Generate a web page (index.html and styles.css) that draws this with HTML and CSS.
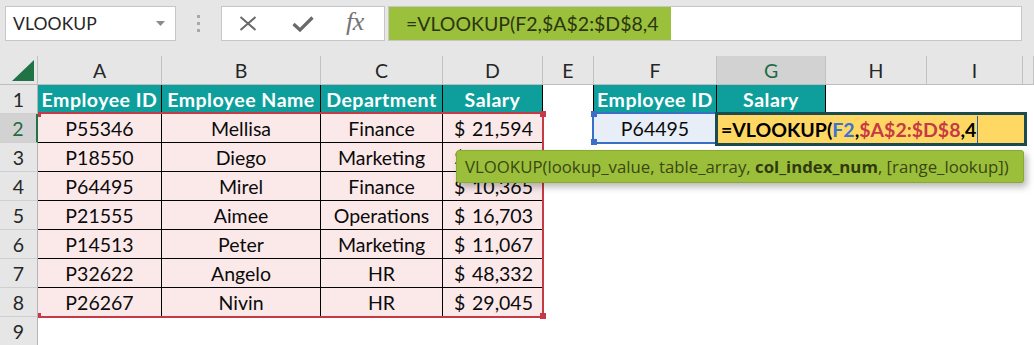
FILE: index.html
```html
<!DOCTYPE html>
<html>
<head>
<meta charset="utf-8">
<link rel="stylesheet" href="styles.css">
</head>
<body>
<div class="toolbar">
  <div class="namebox">
    <span class="nb-text">VLOOKUP</span>
    <svg class="nb-arrow" width="9" height="5" viewBox="0 0 9 5"><path d="M0 0 H9 L4.5 5 Z" fill="#8a8a8a"/></svg>
  </div>
  <div class="dots"><span></span><span></span><span></span></div>
  <div class="fxbox">
    <svg class="ico-x" width="18" height="15" viewBox="0 0 18 15"><path d="M1.5 1 L16.5 14 M16.5 1 L1.5 14" stroke="#6a6a6a" stroke-width="2" fill="none"/></svg>
    <svg class="ico-check" width="22" height="16" viewBox="0 0 22 16"><path d="M1.5 8 L8 14 L20.5 1.5" stroke="#6a6a6a" stroke-width="3.2" fill="none"/></svg>
    <span class="fx">fx</span>
  </div>
  <div class="formula"><span class="formula-hl">=VLOOKUP(F2,$A$2:$D$8,4</span></div>
</div>

<div class="sheet">
  <div class="c ch corner"><svg width="22" height="21" viewBox="0 0 22 21"><path d="M22 0 V21 H0 Z" fill="#217346"/></svg></div>
  <div class="c ch">A</div>
  <div class="c ch">B</div>
  <div class="c ch">C</div>
  <div class="c ch">D</div>
  <div class="c ch">E</div>
  <div class="c ch">F</div>
  <div class="c ch active">G</div>
  <div class="c ch">H</div>
  <div class="c ch">I</div>
  <div class="c ch"></div>

  <div class="c rh">1</div>
  <div class="c th">Employee ID</div>
  <div class="c th">Employee Name</div>
  <div class="c th">Department</div>
  <div class="c th">Salary</div>
  <div class="c e e1"></div>
  <div class="c th">Employee ID</div>
  <div class="c th">Salary</div>
  <div class="c e"></div>
  <div class="c e"></div>
  <div class="c e"></div>

  <div class="c rh active">2</div>
  <div class="c td">P55346</div>
  <div class="c td">Mellisa</div>
  <div class="c td">Finance</div>
  <div class="c td money"><span>$</span><span>21,594</span></div>
  <div class="c e"></div>
  <div class="c sel">P64495</div>
  <div class="c e"></div>
  <div class="c e"></div>
  <div class="c e"></div>
  <div class="c e"></div>

  <div class="c rh">3</div>
  <div class="c td">P18550</div>
  <div class="c td">Diego</div>
  <div class="c td">Marketing</div>
  <div class="c td money"><span>$</span><span class="hidden-val">38,210</span></div>
  <div class="c e"></div>
  <div class="c e"></div>
  <div class="c e"></div>
  <div class="c e"></div>
  <div class="c e"></div>
  <div class="c e"></div>

  <div class="c rh">4</div>
  <div class="c td">P64495</div>
  <div class="c td">Mirel</div>
  <div class="c td">Finance</div>
  <div class="c td money"><span>$</span><span>10,365</span></div>
  <div class="c e"></div>
  <div class="c e"></div>
  <div class="c e"></div>
  <div class="c e"></div>
  <div class="c e"></div>
  <div class="c e"></div>

  <div class="c rh">5</div>
  <div class="c td">P21555</div>
  <div class="c td">Aimee</div>
  <div class="c td">Operations</div>
  <div class="c td money"><span>$</span><span>16,703</span></div>
  <div class="c e"></div>
  <div class="c e"></div>
  <div class="c e"></div>
  <div class="c e"></div>
  <div class="c e"></div>
  <div class="c e"></div>

  <div class="c rh">6</div>
  <div class="c td">P14513</div>
  <div class="c td">Peter</div>
  <div class="c td">Marketing</div>
  <div class="c td money"><span>$</span><span>11,067</span></div>
  <div class="c e"></div>
  <div class="c e"></div>
  <div class="c e"></div>
  <div class="c e"></div>
  <div class="c e"></div>
  <div class="c e"></div>

  <div class="c rh">7</div>
  <div class="c td">P32622</div>
  <div class="c td">Angelo</div>
  <div class="c td">HR</div>
  <div class="c td money"><span>$</span><span>48,332</span></div>
  <div class="c e"></div>
  <div class="c e"></div>
  <div class="c e"></div>
  <div class="c e"></div>
  <div class="c e"></div>
  <div class="c e"></div>

  <div class="c rh">8</div>
  <div class="c td">P26267</div>
  <div class="c td">Nivin</div>
  <div class="c td">HR</div>
  <div class="c td money"><span>$</span><span>29,045</span></div>
  <div class="c e"></div>
  <div class="c e"></div>
  <div class="c e"></div>
  <div class="c e"></div>
  <div class="c e"></div>
  <div class="c e"></div>

  <div class="c rh">9</div>
  <div class="c e"></div>
  <div class="c e"></div>
  <div class="c e"></div>
  <div class="c e"></div>
  <div class="c e"></div>
  <div class="c e"></div>
  <div class="c e"></div>
  <div class="c e"></div>
  <div class="c e"></div>
  <div class="c e"></div>

  <div class="range-red">
    <i class="h h-tl"></i><i class="h h-tr"></i><i class="h h-bl"></i><i class="h h-br"></i>
  </div>
  <div class="range-blue">
    <i class="h h-tl"></i><i class="h h-bl"></i>
  </div>
  <div class="editbox"><span class="k">=VLOOKUP(</span><span class="ref-blue">F2</span><span class="k">,</span><span class="ref-red">$A$2:$D$8</span><span class="k">,4</span><span class="caret"></span></div>
  <div class="tooltip"><span class="tt-text">VLOOKUP(lookup_value, table_array, <b>col_index_num</b>, [range_lookup])</span></div>
</div>
</body>
</html>
```

FILE: styles.css
```css
html, body {
  margin: 0;
  padding: 0;
}
body {
  width: 1034px;
  height: 345px;
  overflow: hidden;
  background: #ffffff;
  font-family: Lato, "Open Sans", sans-serif;
  color: #000;
}

/* ---------- toolbar / formula bar ---------- */
.toolbar {
  height: 56px;
  box-sizing: border-box;
  background: #e6e6e6;
  display: flex;
  align-items: flex-start;
  padding-top: 6px;
}
.namebox {
  margin-left: 5px;
  width: 171px;
  height: 35px;
  box-sizing: border-box;
  border: 1px solid #c6c6c6;
  background: #fff;
  display: flex;
  align-items: center;
  justify-content: space-between;
  padding: 0 10px 0 7px;
}
.nb-text {
  font-size: 17.5px;
  color: #262626;
  letter-spacing: 0.1px;
}
.dots {
  margin-left: 21px;
  width: 3px;
  height: 35px;
  display: flex;
  flex-direction: column;
  justify-content: center;
  gap: 4px;
}
.dots span {
  width: 3px;
  height: 3px;
  background: #a8a8a8;
}
.fxbox {
  margin-left: 21px;
  width: 164px;
  height: 35px;
  box-sizing: border-box;
  border: 1px solid #c6c6c6;
  background: #fff;
  display: flex;
  align-items: center;
}
.ico-x {
  margin-left: 17px;
}
.ico-check {
  margin-left: 35px;
}
.fx {
  margin-left: 32px;
  font-family: "Liberation Serif", "DejaVu Serif", serif;
  font-style: italic;
  font-size: 26px;
  color: #747474;
  letter-spacing: -0.5px;
  margin-top: -3px;
}
.formula {
  margin-left: 3px;
  width: 634px;
  height: 35px;
  box-sizing: border-box;
  border: 1px solid #c6c6c6;
  background: #fff;
  display: flex;
}
.formula-hl {
  background: #9bc03b;
  color: #2b3512;
  font-size: 19.5px;
  display: flex;
  align-items: center;
  padding: 0 12px 0 17px;
}

/* ---------- sheet grid ---------- */
.sheet {
  position: relative;
  display: grid;
  grid-template-columns: 38px 124px 159px 122px 100px 51px 123px 109px 101px 96px 1fr;
  grid-template-rows: repeat(10, 29px);
}
.c {
  box-sizing: border-box;
  border-right: 1px solid transparent;
  border-bottom: 1px solid transparent;
  display: flex;
  align-items: center;
  justify-content: center;
  font-size: 19.5px;
  white-space: nowrap;
  overflow: hidden;
}
.ch {
  background: #e6e6e6;
  border-right-color: #c2c2c2;
  border-bottom-color: #bdbdbd;
  color: #262626;
}
.ch.active {
  background: #d2d2d2;
  color: #1d6b43;
}
.corner {
  justify-content: flex-end;
  align-items: flex-end;
  padding: 0 3px 3px 0;
}
.rh {
  background: #e6e6e6;
  border-right-color: #b5b5b5;
  border-bottom-color: #cfcfcf;
  color: #262626;
}
.rh.active {
  background: #d2d2d2;
  color: #1d6b43;
  border-right: 2px solid #217346;
}
.th {
  background: #0e9f9d;
  color: #ffffff;
  font-weight: 700;
  letter-spacing: 0.5px;
  border-right-color: #000;
  border-bottom-color: #000;
}
.td {
  background: #fbe9ea;
  border-right-color: #000;
  border-bottom-color: #000;
  color: #0b0b0b;
}
.money {
  justify-content: space-between;
  padding: 0 9px 0 11px;
}
.hidden-val {
  visibility: hidden;
}
.e {
  background: #fff;
}
.e1 {
  border-right-color: #000;
}
.sel {
  background: #e8eef8;
  color: #0b0b0b;
}

/* ---------- overlays ---------- */
.range-red {
  position: absolute;
  left: 38px;
  top: 56px;
  width: 506px;
  height: 206px;
  box-sizing: border-box;
  border: 2px solid #c63a45;
  border-left: none;
}
.range-red .h {
  position: absolute;
  width: 6px;
  height: 6px;
  background: #c63a45;
}
.range-red .h-tl { left: 0; top: -2px; width: 3px; height: 5px; }
.range-red .h-bl { left: 0; bottom: -2px; width: 3px; height: 5px; }
.range-red .h-tr { right: -4px; top: -3px; }
.range-red .h-br { right: -4px; bottom: -3px; }

.range-blue {
  position: absolute;
  left: 592px;
  top: 56px;
  width: 130px;
  height: 32px;
  box-sizing: border-box;
  border: 2px solid #3a6fc6;
}
.range-blue .h {
  position: absolute;
  width: 6px;
  height: 6px;
  background: #3a6fc6;
}
.range-blue .h-tl { left: -3px; top: -3px; }
.range-blue .h-bl { left: -3px; bottom: -3px; }

.editbox {
  position: absolute;
  left: 715px;
  top: 56px;
  width: 312px;
  height: 34px;
  box-sizing: border-box;
  border: 3px solid #1b4b4f;
  background: #ffd863;
  display: flex;
  align-items: center;
  padding-left: 3px;
  font-size: 19.5px;
  font-weight: 700;
  color: #000;
  white-space: nowrap;
}
.ref-blue { color: #3b73cf; }
.ref-red { color: #c63a45; }
.caret {
  display: inline-block;
  width: 1px;
  height: 27px;
  background: #2e5bb8;
  margin-left: 1px;
}

.tooltip {
  position: absolute;
  left: 456px;
  top: 94px;
  width: 568px;
  height: 33px;
  box-sizing: border-box;
  background: #9cbf3b;
  border: 1px solid #88aa2e;
  border-radius: 3px;
  box-shadow: 3px 4px 7px rgba(0, 0, 0, 0.28);
  display: flex;
  align-items: center;
  padding-left: 8px;
  font-family: "Open Sans", "Noto Sans", sans-serif;
  font-size: 16.8px;
  color: #3a4713;
  white-space: nowrap;
}
.tooltip b {
  font-weight: 700;
  color: #2f3a0e;
}
```
